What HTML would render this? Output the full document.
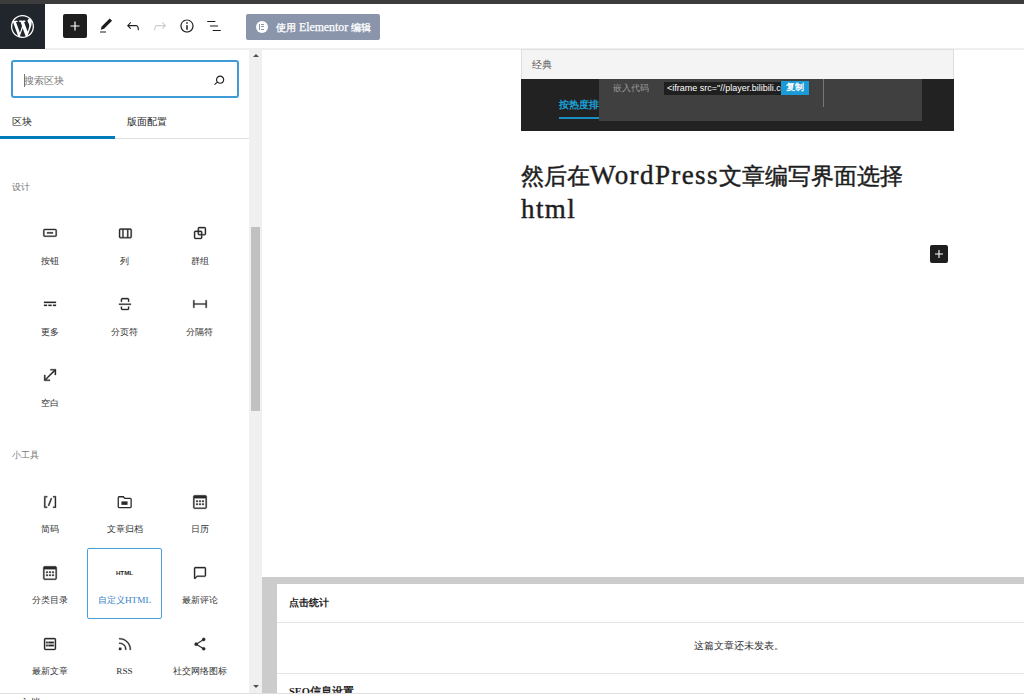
<!DOCTYPE html>
<html><head><meta charset="utf-8">
<style>
*{box-sizing:border-box;margin:0;padding:0}
html,body{width:1024px;height:700px;overflow:hidden;background:#fff;font-family:"Liberation Sans",sans-serif;color:#1e1e1e}
.a{position:absolute}
svg{display:block}
#topbar{left:0;top:0;width:1024px;height:4px;background:#3c3c3c}
#topbar2{left:45px;top:3.5px;width:979px;height:0.5px;background:#fff}
#header{left:0;top:4px;width:1024px;height:44px;background:#fff}
#hline{left:45px;top:48px;width:979px;height:2px;background:#efefef}
#wp{left:0;top:4px;width:45px;height:44.6px;background:#21262d}
.hi{fill:#1e1e1e}
#plus{left:63px;top:14px;width:24px;height:24px;background:#1e1e1e;border-radius:2px}
#elem{left:246px;top:14px;width:134px;height:25.5px;background:#8a94ab;border-radius:2px}
#elem .cj{font-size:9.5px;font-weight:normal;-webkit-text-stroke:0.3px #fff}
#elem .t{left:30px;top:5.5px;font-family:"Liberation Serif",serif;font-weight:normal;font-size:11.8px;color:#fff;white-space:nowrap;line-height:15px;-webkit-text-stroke:0.25px #fff}
#sidebar{left:0;top:50px;width:249px;height:643px;background:#fff;overflow:hidden}
#search{left:11px;top:60px;width:228px;height:38px;border:2px solid #3f9bd3;border-radius:3px}
#search .ph{left:11px;top:12px;font-size:10px;color:#757575;line-height:14px}
#search .caret{left:11px;top:11.5px;width:1px;height:13px;background:#777}
.tab{top:115px;font-family:"Liberation Serif",serif;font-size:10px;line-height:14px;color:#1e1e1e}
#tabline{left:0;top:138px;width:249px;height:1px;background:#e0e0e0}
#tabactive{left:0;top:136px;width:115px;height:3px;background:#007cba}
.sec{left:12px;font-family:"Liberation Serif",serif;font-size:9.2px;color:#757575;line-height:12px}
.item{width:75px;height:70px}
.item svg{position:absolute;left:28.5px;top:14px;fill:#1e1e1e}
.item .l{position:absolute;left:0;width:75px;text-align:center;top:36px;font-family:"Liberation Serif",serif;font-size:10px;line-height:13px;color:#1e1e1e}
#scroll{left:249px;top:50px;width:13px;height:643px;background:#f0f0f0}
#thumb{left:250.5px;top:227px;width:9.5px;height:183.5px;background:#c1c1c1}
#canvas{left:262px;top:50px;width:762px;height:643px;background:#fff;overflow:hidden}
#img{left:521px;top:49px;width:433px;height:82px;background:#222}
#imghead{left:521px;top:49px;width:433px;height:30px;background:#f4f4f4;border:1px solid #dedede;border-bottom:0}
#overlay{left:599px;top:79px;width:323px;height:42px;background:#404040}
#heading{left:521px;top:158.5px;width:440px;font-family:"Liberation Serif",serif;font-size:23px;line-height:32px;color:#1e1e1e;white-space:nowrap;-webkit-text-stroke:0.45px #1e1e1e}
#heading .lt{font-size:27px;letter-spacing:1.4px}
#bplus{left:930px;top:245px;width:18px;height:18px;background:#1e1e1e;border-radius:2px}
#meta{left:262px;top:577px;width:762px;height:116px;background:#ccc}
#metabox{left:277px;top:584px;width:747px;height:109px;background:#fff}
#footer{left:0;top:693px;width:1024px;height:7px;background:#fff;border-top:1px solid #e0e0e0}
.bi{fill:#2a2a2a;stroke:#2a2a2a;stroke-width:0.45px}
.lbl{width:75px;text-align:center;font-family:"Liberation Serif",serif;font-size:9.2px;line-height:14px;color:#333;white-space:nowrap}
.lbl.sel{color:#3582c4}
.htmlico{width:24px;text-align:center;font-family:"Liberation Sans",sans-serif;font-weight:bold;font-size:6.2px;line-height:9px;padding-top:1px;color:#1e1e1e}
#selbox{left:86.5px;top:548px;width:75.5px;height:71px;border:1px solid #4a9fd8;border-radius:2px}
</style></head><body>
<div class="a" id="topbar"></div>
<div class="a" id="header"></div>
<div class="a" id="hline"></div>
<div class="a" id="wp">
 <svg class="a" style="left:11px;top:10.5px" width="23" height="23" viewBox="0 0 20 20"><path fill="#fff" d="M20 10c0-5.52-4.48-10-10-10S0 4.48 0 10s4.48 10 10 10 10-4.48 10-10zM7.78 15.37L4.370 6.22c.55-.02 1.17-.08 1.17-.08.5-.06.44-1.13-.06-1.11 0 0-1.45.11-2.37.11-.18 0-.37 0-.58-.01C4.120 2.69 6.870 1.11 10 1.11c2.33 0 4.45.87 6.05 2.34-.68-.11-1.65.39-1.65 1.58 0 .74.45 1.36.9 2.1.35.61.55 1.36.55 2.46 0 1.49-1.4 5-1.4 5l-3.030-8.37c.54-.02.82-.17.82-.17.5-.05.44-1.25-.06-1.22 0 0-1.44.12-2.38.12-.87 0-2.33-.12-2.330-.12-.5-.03-.56 1.2-.06 1.22l.92.08 1.26 3.41zM17.41 10c.24-.64.74-1.87.43-4.25.7 1.290 1.05 2.71 1.05 4.25 0 3.29-1.73 6.24-4.4 7.78.97-2.59 1.94-5.2 2.92-7.78zM6.1 18.09C3.120 16.65 1.110 13.53 1.110 10c0-1.3.23-2.48.72-3.59C3.25 10.3 4.670 14.2 6.1 18.090zm4.030-6.63l2.58 6.98c-.86.29-1.76.45-2.71.45-.79 0-1.57-.11-2.29-.33.81-2.38 1.62-4.74 2.42-7.1z"/></svg>
</div>
<div class="a" id="plus"><svg class="a" style="left:3px;top:3px" width="18" height="18" viewBox="0 0 24 24"><path fill="#fff" d="M18 11.2h-5.2V6h-1.6v5.2H6v1.6h5.2V18h1.6v-5.2H18z"/></svg></div>
<svg class="a hi" style="left:97px;top:17px" width="18" height="18" viewBox="0 0 24 24"><path d="M20.1 5.1L16.9 2 6.2 12.7l-1.3 4.4 4.5-1.3L20.1 5.1zM4 20.8h8v-1.5H4v1.5z"/></svg>
<svg class="a hi" style="left:124px;top:17px" width="18" height="18" viewBox="0 0 24 24"><path d="M18.3 11.7c-.6-.6-1.4-.9-2.3-.9H6.7l2.9-3.3-1.1-1-4.5 5L8.5 16l1-1-2.7-2.7H16c.5 0 .9.2 1.3.5 1 1 1 3.4 1 4.5v.3h1.5v-.2c0-1.5 0-4.3-1.5-5.7z"/></svg>
<svg class="a" style="left:151px;top:17px;fill:#ccc" width="18" height="18" viewBox="0 0 24 24"><path d="M15.6 6.5l-1.1 1 2.9 3.3H8c-.9 0-1.7.3-2.3.9-1.4 1.5-1.4 4.2-1.4 5.6v.2h1.5v-.3c0-1.1 0-3.5 1-4.5.3-.3.7-.5 1.3-.5h9.2L14.5 15l1.1 1.1 4.6-4.6-4.6-5z"/></svg>
<svg class="a hi" style="left:178px;top:17px" width="18" height="18" viewBox="0 0 24 24"><path d="M12 3.2c-4.8 0-8.8 3.900-8.8 8.8 0 4.800 3.900 8.800 8.800 8.8 4.800 0 8.800-3.900 8.800-8.8 0-4.800-4-8.800-8.800-8.8zm0 16c-4 0-7.2-3.3-7.2-7.2C4.800 8 8 4.800 12 4.800s7.2 3.300 7.2 7.2c0 4-3.2 7.2-7.2 7.2zM11 17h2v-6h-2v6zm0-8h2V7h-2v2z"/></svg>
<svg class="a hi" style="left:205px;top:17.3px" width="18" height="18" viewBox="0 0 24 24"><path d="M13.8 5.2H3v1.5h10.8V5.2zm-3.6 12v1.5H21v-1.5H10.2zm7.2-6H6.6v1.5h10.8v-1.5z"/></svg>
<div class="a" id="elem">
 <div class="a" style="left:9.5px;top:6.5px;width:12.5px;height:12.5px;border-radius:50%;background:#fff"></div>
 <div class="a" style="left:13.2px;top:9.8px;width:1.2px;height:6px;background:#8a94ab"></div>
 <div class="a" style="left:15.4px;top:9.8px;width:3px;height:1.2px;background:#8a94ab"></div>
 <div class="a" style="left:15.4px;top:12.2px;width:3px;height:1.2px;background:#8a94ab"></div>
 <div class="a" style="left:15.4px;top:14.6px;width:3px;height:1.2px;background:#8a94ab"></div>
 <div class="a t"><span class="cj">使用</span> Elementor <span class="cj">编辑</span></div>
</div>

<div class="a" id="sidebar"></div>
<div class="a" id="search">
 <div class="a ph">搜索区块</div>
 <div class="a caret"></div>
 <svg class="a" style="left:197px;top:8.5px;fill:#1e1e1e" width="18" height="18" viewBox="0 0 24 24"><path d="M13.5 6C10.5 6 8 8.5 8 11.5c0 1.1.3 2.1.9 3l-3.4 3 1 1.1 3.4-2.9c1 .9 2.2 1.4 3.6 1.4 3 0 5.5-2.5 5.5-5.5C19 8.5 16.5 6 13.5 6zm0 9.5c-2.2 0-4-1.8-4-4s1.8-4 4-4 4 1.8 4 4-1.8 4-4 4z"/></svg>
</div>
<div class="a tab" style="left:12px">区块</div>
<div class="a tab" style="left:127px">版面配置</div>
<div class="a" id="tabline"></div>
<div class="a" id="tabactive"></div>

<div class="a sec" style="top:181px">设计</div>
<div class="a sec" style="top:449px">小工具</div>

<div class="a" id="selbox"></div>
<!--ITEMS-->
<svg class="a bi" style="left:40.5px;top:223.9px" width="18" height="18" viewBox="0 0 24 24"><path d="M8 12.5h8V11H8v1.5Z M19 6.5H5a2 2 0 0 0-2 2V15a2 2 0 0 0 2 2h14a2 2 0 0 0 2-2V8.5a2 2 0 0 0-2-2ZM5 8h14a.5.5 0 0 1 .5.5V15a.5.5 0 0 1-.5.5H5a.5.5 0 0 1-.5-.5V8.5A.5.5 0 0 1 5 8Z"/></svg>
<div class="a lbl" style="left:12.0px;top:253.7px">按钮</div>
<svg class="a bi" style="left:115.5px;top:223.9px" width="18" height="18" viewBox="0 0 24 24"><path d="M19 6H6c-1.1 0-2 .9-2 2v9c0 1.1.9 2 2 2h13c1.1 0 2-.9 2-2V8c0-1.1-.9-2-2-2zm-4.1 1.5v10H10v-10h4.9zM5.5 17V8c0-.3.2-.5.5-.5h2.5v10H6c-.3 0-.5-.2-.5-.5zm14 0c0 .3-.2.5-.5.5h-2.6v-10H19c.3 0 .5.2.5.5v9z"/></svg>
<div class="a lbl" style="left:87.0px;top:253.7px">列</div>
<svg class="a bi" style="left:190.5px;top:223.9px" width="18" height="18" viewBox="0 0 24 24"><path d="M18 4h-7c-1.1 0-2 .9-2 2v3H6c-1.1 0-2 .9-2 2v7c0 1.1.9 2 2 2h7c1.1 0 2-.9 2-2v-3h3c1.1 0 2-.9 2-2V6c0-1.1-.9-2-2-2zm-4.5 14c0 .3-.2.5-.5.5H6c-.3 0-.5-.2-.5-.5v-7c0-.3.2-.5.5-.5h3V13c0 1.1.9 2 2 2h2.5v3zm0-4.5H11c-.3 0-.5-.2-.5-.5v-2.5H13c.3 0 .5.2.5.5v2.5zm5-.5c0 .3-.2.5-.5.5h-3V11c0-1.1-.9-2-2-2h-2.5V6c0-.3.2-.5.5-.5h7c.3 0 .5.2.5.5v7z"/></svg>
<div class="a lbl" style="left:162.0px;top:253.7px">群组</div>
<svg class="a bi" style="left:40.5px;top:295.0px" width="18" height="18" viewBox="0 0 24 24"><path d="M4 9v1.5h16V9H4zm12 5.5h4V13h-4v1.5zm-6 0h4V13h-4v1.5zm-6 0h4V13H4v1.5z"/></svg>
<div class="a lbl" style="left:12.0px;top:324.8px">更多</div>
<svg class="a bi" style="left:115.5px;top:295.0px" width="18" height="18" viewBox="0 0 24 24"><path d="M17.5 9V6a2 2 0 0 0-2-2h-7a2 2 0 0 0-2 2v3H8V6a.5.5 0 0 1 .5-.5h7a.5.5 0 0 1 .5.5v3h1.5Zm0 6.5V18a2 2 0 0 1-2 2h-7a2 2 0 0 1-2-2v-2.5H8V18a.5.5 0 0 0 .5.5h7a.5.5 0 0 0 .5-.5v-2.5h1.5ZM4 13h16v-1.5H4V13Z"/></svg>
<div class="a lbl" style="left:87.0px;top:324.8px">分页符</div>
<svg class="a bi" style="left:190.5px;top:295.0px" width="18" height="18" viewBox="0 0 24 24"><path d="M3 7h1.5v10H3zM19.5 7H21v10h-1.5zM4.5 11.25h15v1.5h-15z"/></svg>
<div class="a lbl" style="left:162.0px;top:324.8px">分隔符</div>
<svg class="a bi" style="left:40.5px;top:366.2px" width="18" height="18" viewBox="0 0 24 24"><path d="M12.5 4.2v1.6h4.7L5.8 17.2V12H4.2v7.8H12v-1.6H6.9l11.5-11.3v5h1.6V4.2h-7.5z"/></svg>
<div class="a lbl" style="left:12.0px;top:396.0px">空白</div>
<svg class="a bi" style="left:40.5px;top:492.7px" width="18" height="18" viewBox="0 0 24 24"><path d="M16 4.2v1.5h2.5v12.5H16v1.5h4V4.2h-4zM4.2 19.8h4v-1.5H5.8V5.8h2.5V4.2h-4l-.1 15.6zm5.1-3.1l1.4.6 4-10-1.4-.6-4 10z"/></svg>
<div class="a lbl" style="left:12.0px;top:522.0px">简码</div>
<svg class="a bi" style="left:115.5px;top:492.7px" width="18" height="18" viewBox="0 0 24 24"><path fill="none" stroke-width="1.7" d="M3 6.2a1.2 1.2 0 0 1 1.2-1.2h5.6l1.8 2.2h7.4a1.2 1.2 0 0 1 1.2 1.2v9.8a1.2 1.2 0 0 1-1.2 1.2H4.2a1.2 1.2 0 0 1-1.2-1.2z"/><rect x="7.2" y="11.2" width="8.2" height="4.6" stroke="none"/></svg>
<div class="a lbl" style="left:87.0px;top:522.0px">文章归档</div>
<svg class="a bi" style="left:190.5px;top:492.7px" width="18" height="18" viewBox="0 0 24 24"><path d="M19 3H5c-1.1 0-2 .9-2 2v14c0 1.1.9 2 2 2h14c1.1 0 2-.9 2-2V5c0-1.1-.9-2-2-2zm.5 16c0 .3-.2.5-.5.5H5c-.3 0-.5-.2-.5-.5V7h15v12zM9 10H7v2h2v-2zm0 4H7v2h2v-2zm4-4h-2v2h2v-2zm4 0h-2v2h2v-2zm-4 4h-2v2h2v-2zm4 0h-2v2h2v-2z"/></svg>
<div class="a lbl" style="left:162.0px;top:522.0px">日历</div>
<svg class="a bi" style="left:40.5px;top:563.8px" width="18" height="18" viewBox="0 0 24 24"><path d="M19 3H5c-1.1 0-2 .9-2 2v14c0 1.1.9 2 2 2h14c1.1 0 2-.9 2-2V5c0-1.1-.9-2-2-2zm.5 16c0 .3-.2.5-.5.5H5c-.3 0-.5-.2-.5-.5V7h15v12zM9 10H7v2h2v-2zm0 4H7v2h2v-2zm4-4h-2v2h2v-2zm4 0h-2v2h2v-2zm-4 4h-2v2h2v-2zm4 0h-2v2h2v-2z"/></svg>
<div class="a lbl" style="left:12.0px;top:593.1px">分类目录</div>
<div class="a htmlico" style="left:112.5px;top:567.3px">HTML</div>
<div class="a lbl sel" style="left:87.0px;top:593.1px">自定义HTML</div>
<svg class="a bi" style="left:190.5px;top:563.8px" width="18" height="18" viewBox="0 0 24 24"><path d="M18 4H6c-1.1 0-2 .9-2 2v12.9c0 .6.5 1.1 1.1 1.1.3 0 .5-.1.8-.3L8.5 17H18c1.1 0 2-.9 2-2V6c0-1.1-.9-2-2-2zm.5 11c0 .3-.2.5-.5.5H7.9l-2.4 2.4V6c0-.3.2-.5.5-.5h12c.3 0 .5.2.5.5v9z"/></svg>
<div class="a lbl" style="left:162.0px;top:593.1px">最新评论</div>
<svg class="a bi" style="left:40.5px;top:634.8px" width="18" height="18" viewBox="0 0 24 24"><path d="M18 4H6c-1.1 0-2 .9-2 2v12c0 1.1.9 2 2 2h12c1.1 0 2-.9 2-2V6c0-1.1-.9-2-2-2zm.5 14c0 .3-.2.5-.5.5H6c-.3 0-.5-.2-.5-.5V6c0-.3.2-.5.5-.5h12c.3 0 .5.2.5.5v12zM7 11h2V9H7v2zm0 4h2v-2H7v2zm3-4h7V9h-7v2zm0 4h7v-2h-7v2z"/></svg>
<div class="a lbl" style="left:12.0px;top:664.1px">最新文章</div>
<svg class="a bi" style="left:115.5px;top:634.8px" width="18" height="18" viewBox="0 0 24 24"><path d="M5 10.2h-.8v1.5H5c1.9 0 3.8.8 5.1 2.1 1.4 1.4 2.1 3.2 2.1 5.1v.8h1.5V19c0-2.3-.9-4.5-2.6-6.2-1.6-1.6-3.8-2.6-6.1-2.6zm10.4-1.6C12.6 5.8 8.9 4.2 5 4.2h-.8v1.5H5c3.5 0 6.9 1.4 9.4 3.9s3.9 5.8 3.9 9.4v.8h1.5V19c0-3.9-1.6-7.6-4.4-10.4zM4 20h3v-3H4v3z"/></svg>
<div class="a lbl" style="left:87.0px;top:664.1px">RSS</div>
<svg class="a bi" style="left:190.5px;top:634.8px" width="18" height="18" viewBox="0 0 24 24"><circle cx="16.9" cy="5.9" r="2.1"/><circle cx="6.9" cy="12.2" r="2.1"/><circle cx="16.9" cy="18.3" r="2.1"/><path fill="none" stroke-width="1.5" d="M16.9 5.9L6.9 12.2l10 6.1"/></svg>
<div class="a lbl" style="left:162.0px;top:664.1px">社交网络图标</div>
<!--/ITEMS-->
<div class="a" id="scroll"></div>
<div class="a" id="thumb"></div>
<div class="a" style="left:252.5px;top:54.3px;width:0;height:0;border-left:3px solid transparent;border-right:3px solid transparent;border-bottom:3.5px solid #505050"></div>
<div class="a" style="left:252.5px;top:685px;width:0;height:0;border-left:3px solid transparent;border-right:3px solid transparent;border-top:3.5px solid #505050"></div>

<div class="a" id="canvas"></div>
<div class="a" id="img"></div>
<div class="a" id="imghead"></div>
<div class="a" style="left:532px;top:57.5px;font-size:9.8px;line-height:14px;color:#555">经典</div>
<div class="a" style="left:559px;top:98px;font-size:10px;line-height:14px;color:#1aa0d8;font-weight:bold">按热度排</div>
<div class="a" style="left:559px;top:117px;width:45px;height:2px;background:#1a8fc4"></div>
<div class="a" id="overlay"></div>
<div class="a" style="left:613px;top:80.5px;font-size:9.3px;line-height:14px;color:#9a9a9a">嵌入代码</div>
<div class="a" style="left:664px;top:81.5px;width:117px;height:13.5px;background:#1f1f1f;overflow:hidden"><div class="a" style="left:3px;top:0;font-size:9px;line-height:13px;color:#fff;white-space:nowrap">&lt;iframe src="//player.bilibili.com</div></div>
<div class="a" style="left:781px;top:81.2px;width:28px;height:13.8px;background:#1a9ad6;font-size:9px;line-height:13px;color:#fff;font-weight:bold;text-align:center">复制</div>
<div class="a" style="left:823px;top:78.5px;width:1px;height:28px;background:#777"></div>
<div class="a" id="heading">然后在<span class="lt">WordPress</span>文章编写界面选择<br><span class="lt">html</span></div>
<div class="a" id="bplus"><svg class="a" style="left:1px;top:1px" width="16" height="16" viewBox="0 0 24 24"><path fill="#fff" d="M18 11.2h-5.2V6h-1.6v5.2H6v1.6h5.2V18h1.6v-5.2H18z"/></svg></div>
<div class="a" id="meta"></div>
<div class="a" id="metabox"></div>
<div class="a" style="left:277px;top:621.5px;width:747px;height:1px;background:#e2e4e7"></div>
<div class="a" style="left:277px;top:672.5px;width:747px;height:1px;background:#e2e4e7"></div>
<div class="a" style="left:289px;top:596px;font-family:'Liberation Serif',serif;font-weight:bold;font-size:10px;line-height:14px;color:#1e1e1e">点击统计</div>
<div class="a" style="left:694px;top:638.5px;font-family:'Liberation Serif',serif;font-size:10px;line-height:14px;color:#333">这篇文章还未发表。</div>
<div class="a" style="left:289px;top:685px;font-family:'Liberation Serif',serif;font-weight:bold;font-size:10.5px;line-height:14px;color:#1e1e1e">SEO信息设置</div>
<div class="a" id="footer"></div>
<div class="a" style="left:20px;top:696px;font-size:10px;line-height:14px;color:#1e1e1e">文档</div>
</body></html>
